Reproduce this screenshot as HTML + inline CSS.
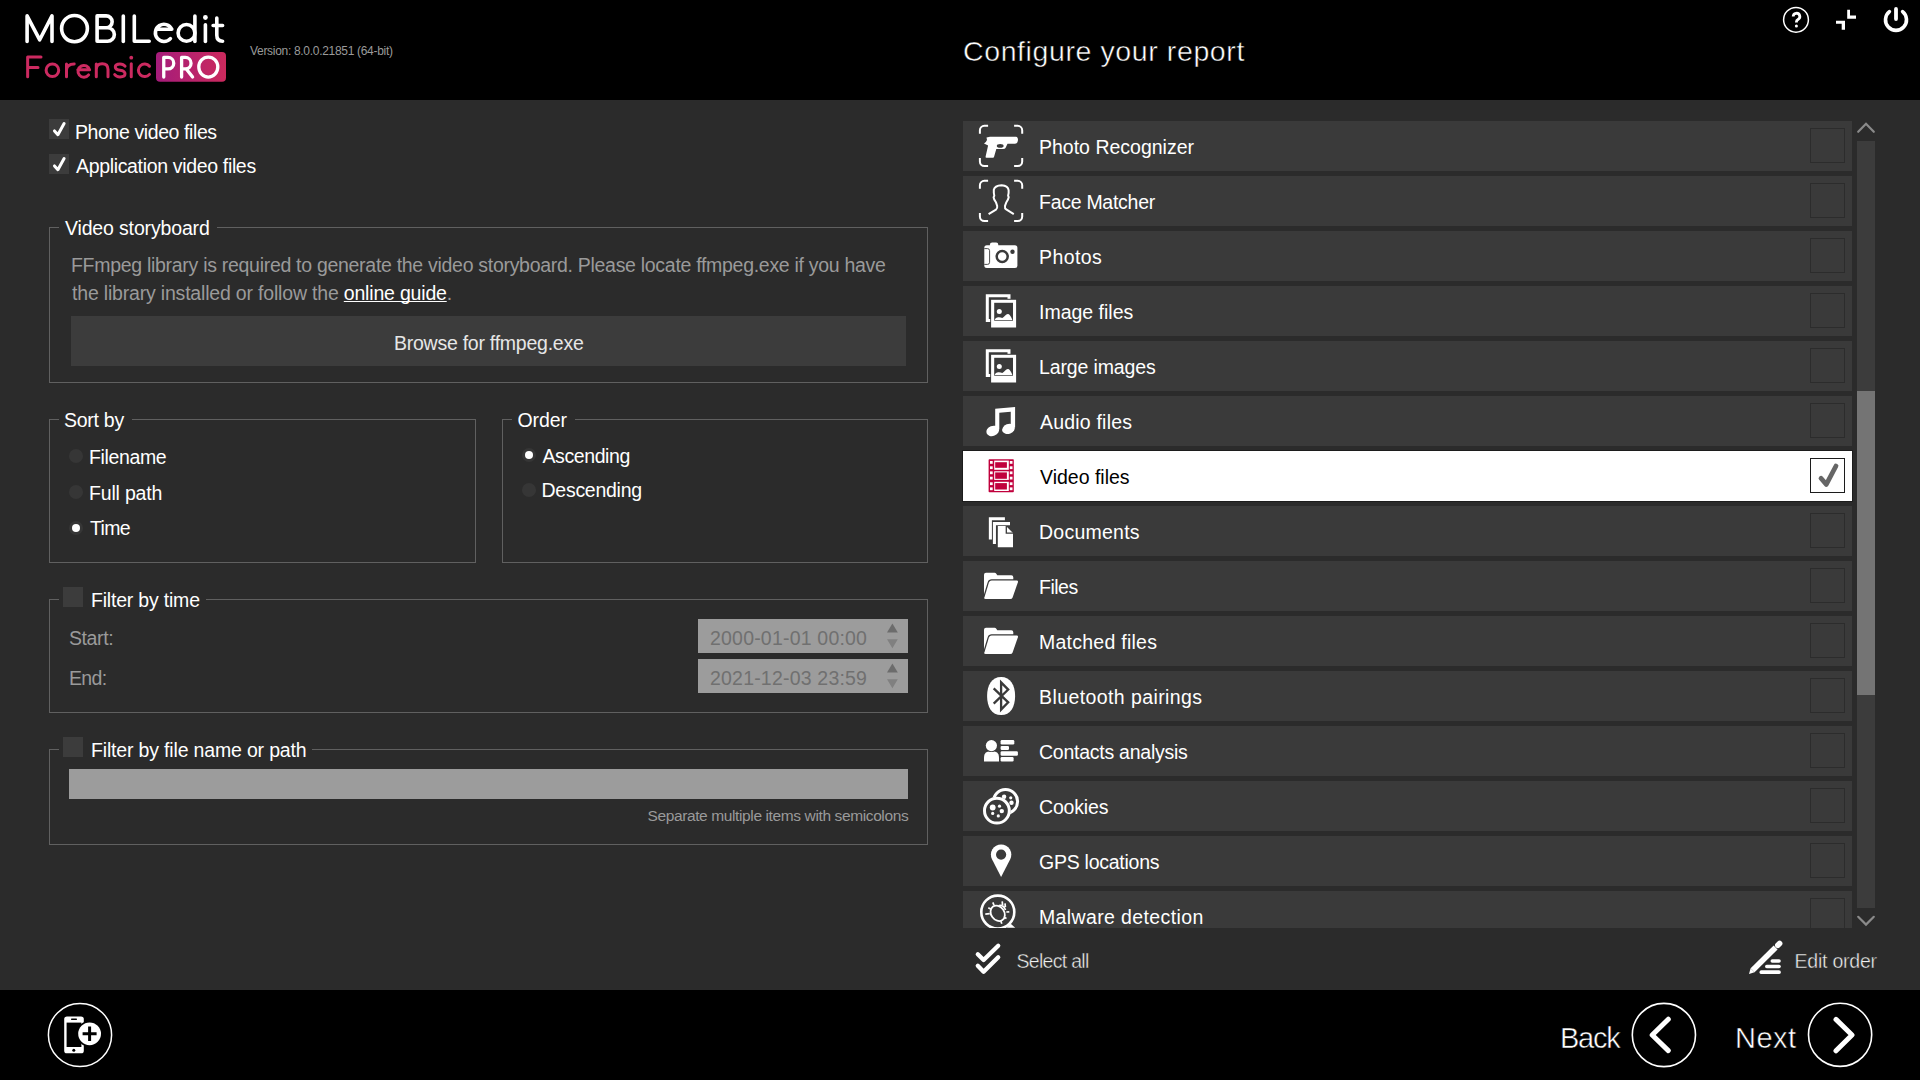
<!DOCTYPE html>
<html><head><meta charset="utf-8"><style>
*{margin:0;padding:0;box-sizing:border-box}
html,body{width:1920px;height:1080px;overflow:hidden;background:#2b2b2b;font-family:"Liberation Sans",sans-serif;color:#fff}
.a{position:absolute}
.t{position:absolute;white-space:nowrap;line-height:1;font-size:19.5px}
.grp{position:absolute;border:1px solid #606060}
.gap{position:absolute;background:#2b2b2b;height:3px}
.cb{position:absolute;width:20px;height:20px;background:#3c3c3c}
.rad{position:absolute;width:14px;height:14px;border-radius:50%;background:#363636}
.rad.on::after{content:"";position:absolute;left:3px;top:3px;width:8px;height:8px;border-radius:50%;background:#fff}
.gray{color:#9a9a9a}
.row{position:absolute;left:963px;width:889px;height:50px;background:#3a3a3a}
.row.sel{background:#fff;box-shadow:0 0 0 1px #1c1c1c}
.row .t{left:76px;top:17px}
.row.sel .t{color:#000}
.rcb{position:absolute;left:847px;top:7px;width:35px;height:35px;border:1px solid #2c2c2c}
.row.sel .rcb{border-color:#1c1c1c}
.ic{position:absolute;left:7px;top:-1px;width:60px;height:55px;overflow:visible}
</style></head><body>
<div class="a" style="left:0;top:0;width:1920px;height:100px;background:#000"></div>
<svg class="a" style="left:0;top:0" width="240" height="100" viewBox="0 0 240 100">
<defs><linearGradient id="pg" x1="0" x2="1" y1="0" y2="0"><stop offset="0" stop-color="#a51c7b"/><stop offset="1" stop-color="#cb2a5d"/></linearGradient></defs>
<g fill="none" stroke="#fff" stroke-width="3.6" stroke-linecap="round" stroke-linejoin="round">
<path d="M27.1,41.4V15.9L39.7,39.8L52,15.9V41.4"/>
<ellipse cx="74.5" cy="28.6" rx="12.9" ry="13.1"/>
<path d="M97.1,41.3V15.9H106.2A5.95,5.95 0 0 1 106.2,27.8H97.1M106.2,27.8H107.6A6.75,6.75 0 0 1 107.6,41.3H97.1"/>
<path d="M123.3,16.1V41.4"/>
<path d="M134.3,16.1V41.2H149.2"/>
<path d="M156.3,29.3H171.8A8.6,8.6 0 1 0 170.4,38.6"/>
<circle cx="186.5" cy="32.9" r="8.4"/>
<path d="M194.9,16.1V41.4"/>
<path d="M205.4,24.8V41.4"/>
<path d="M216.8,18V35.3Q216.8,41.2 222.6,41.2M213.1,25.5H222.6"/>
</g>
<circle cx="205.4" cy="17.5" r="2.4" fill="#fff"/>
<g fill="none" stroke="#cc2a60" stroke-width="3" stroke-linecap="round" stroke-linejoin="round">
<path d="M27.65,76.7V57H41M27.65,67.4H38"/>
<circle cx="52.4" cy="70.25" r="6.3"/>
<path d="M66.5,76.7V63.9M66.5,69.8Q66.8,64.2 74.2,63.9"/>
<path d="M77.8,69.8H89.6A5.9,5.9 0 1 0 88.6,74.9"/>
<path d="M96.3,76.7V63.9M96.3,69.6Q96.3,63.7 102.2,63.7Q108,63.7 108,69.6V76.7"/>
<path d="M125,66.2Q123.4,63.9 120,63.9Q115.3,63.9 115.3,67Q115.3,69.7 120,70.2Q125,70.8 125,73.8Q125,76.9 120,76.9Q116.2,76.9 114.7,74.5"/>
<path d="M131.25,63.8V76.7"/>
<path d="M149.5,66.25A6.3,6.3 0 1 0 149.5,74.35"/>
</g>
<circle cx="131.25" cy="57.7" r="1.9" fill="#cc2a60"/>
<rect x="156" y="52" width="70" height="29.75" rx="4" fill="url(#pg)"/>
<g fill="none" stroke="#fff" stroke-width="3.3" stroke-linecap="round" stroke-linejoin="round">
<path d="M163.75,77V57.4H168A5.75,5.75 0 0 1 168,68.9H163.75"/>
<path d="M181.6,77V57.4H185.3A5.75,5.75 0 0 1 185.3,68.9H181.6M186.5,69.2L192.6,77"/>
<ellipse cx="208.3" cy="67.05" rx="9.5" ry="10"/>
</g>
</svg>
<div class="t" style="left:250px;top:45px;font-size:12px;letter-spacing:-0.304px;color:#9a9a9a;">Version: 8.0.0.21851 (64-bit)</div>
<div class="t" style="left:963px;top:37px;font-size:28.5px;letter-spacing:0.600px;-webkit-text-stroke:0.5px #000;">Configure your report</div>
<svg class="a" style="left:1760px;top:0" width="160" height="45" viewBox="1760 0 160 45">
<circle cx="1796" cy="19.8" r="12.4" fill="none" stroke="#fff" stroke-width="1.5"/>
<path d="M1793.2,16.6a3.3,3.3 0 1 1 4.8,2.9q-1.6,0.9 -1.6,2.5v0.6" fill="none" stroke="#fff" stroke-width="2.8"/>
<circle cx="1796.4" cy="25.9" r="1.5" fill="#fff"/>
<path d="M1847.2,9.8h2.8v5.8h6v3.15h-8.8z M1836,20.7h9v9h-3.3v-5.9h-5.7z" fill="#fff"/>
<path d="M1889.4,11.7A10.5,10.5 0 1 0 1902.6,11.7" fill="none" stroke="#fff" stroke-width="3.6" stroke-linecap="round"/>
<path d="M1896,8.9V19" stroke="#fff" stroke-width="3.8" stroke-linecap="round"/>
</svg>
<div class="cb" style="left:49px;top:119px"></div><svg class="a" style="left:49px;top:119px" width="20" height="20" viewBox="0 0 20 20"><path d="M5.5,11.9L8.9,15.7L15.1,4.5" fill="none" stroke="#fff" stroke-width="3" stroke-linecap="round" stroke-linejoin="round"/></svg>
<div class="cb" style="left:49px;top:154px"></div><svg class="a" style="left:49px;top:154px" width="20" height="20" viewBox="0 0 20 20"><path d="M5.5,11.9L8.9,15.7L15.1,4.5" fill="none" stroke="#fff" stroke-width="3" stroke-linecap="round" stroke-linejoin="round"/></svg>
<div class="t" style="left:75px;top:123px;letter-spacing:-0.400px;">Phone video files</div>
<div class="t" style="left:76px;top:157px;letter-spacing:-0.336px;">Application video files</div>
<div class="grp" style="left:49px;top:227px;width:879px;height:156px"></div>
<div class="gap" style="left:59px;top:226px;width:158px"></div>
<div class="t" style="left:65px;top:219px;letter-spacing:-0.153px;">Video storyboard</div>
<div class="t" style="left:71px;top:256px;letter-spacing:-0.292px;color:#9a9a9a;">FFmpeg library is required to generate the video storyboard. Please locate ffmpeg.exe if you have</div>
<div class="t" style="left:72px;top:284px;letter-spacing:-0.188px;color:#9a9a9a;">the library installed or follow the <span style="color:#fff;text-decoration:underline;text-underline-offset:1px;text-decoration-skip-ink:none">online guide</span>.</div>
<div class="a" style="left:71px;top:316px;width:835px;height:50px;background:#3c3c3c"></div>
<div class="t" style="left:394px;top:334px;letter-spacing:-0.250px;color:#e6e6e6;">Browse for ffmpeg.exe</div>
<div class="grp" style="left:49px;top:419px;width:427px;height:144px"></div>
<div class="gap" style="left:59px;top:418px;width:73px"></div>
<div class="t" style="left:64px;top:411px;letter-spacing:-0.267px;">Sort by</div>
<div class="rad" style="left:69px;top:449px"></div>
<div class="t" style="left:89px;top:448px;letter-spacing:-0.371px;">Filename</div>
<div class="rad" style="left:69px;top:485px"></div>
<div class="t" style="left:89px;top:484px;letter-spacing:-0.188px;">Full path</div>
<div class="rad on" style="left:69px;top:521px"></div>
<div class="t" style="left:90px;top:519px;letter-spacing:-0.667px;">Time</div>
<div class="grp" style="left:502px;top:419px;width:426px;height:144px"></div>
<div class="gap" style="left:512px;top:418px;width:63px"></div>
<div class="t" style="left:517.5px;top:411px;letter-spacing:-0.075px;">Order</div>
<div class="rad on" style="left:522px;top:448px"></div>
<div class="t" style="left:542.5px;top:447px;letter-spacing:-0.412px;">Ascending</div>
<div class="rad" style="left:522px;top:483px"></div>
<div class="t" style="left:541.5px;top:481px;letter-spacing:-0.267px;">Descending</div>
<div class="grp" style="left:49px;top:599px;width:879px;height:114px"></div>
<div class="gap" style="left:59px;top:598px;width:147px"></div>
<div class="cb" style="left:63px;top:587px"></div>
<div class="t" style="left:91px;top:591px;letter-spacing:-0.200px;">Filter by time</div>
<div class="t" style="left:69px;top:629px;letter-spacing:-0.400px;color:#9a9a9a;">Start:</div>
<div class="t" style="left:69px;top:669px;letter-spacing:-0.667px;color:#9a9a9a;">End:</div>
<div class="a" style="left:698px;top:619px;width:210px;height:34px;background:#9c9c9c"></div>
<div class="t" style="left:710px;top:629px;letter-spacing:0.200px;color:#707070;">2000-01-01 00:00</div>
<svg class="a" style="left:885px;top:619px" width="16" height="34" viewBox="0 0 16 34"><path d="M2,13.5L7.4,4.4L12.8,13.5Z" fill="#6c6c6c"/><path d="M2,20.3L7.4,29.3L12.8,20.3Z" fill="#808080"/></svg>
<div class="a" style="left:698px;top:659px;width:210px;height:34px;background:#9c9c9c"></div>
<div class="t" style="left:710px;top:669px;letter-spacing:0.200px;color:#707070;">2021-12-03 23:59</div>
<svg class="a" style="left:885px;top:659px" width="16" height="34" viewBox="0 0 16 34"><path d="M2,13.5L7.4,4.4L12.8,13.5Z" fill="#6c6c6c"/><path d="M2,20.3L7.4,29.3L12.8,20.3Z" fill="#808080"/></svg>
<div class="grp" style="left:49px;top:749px;width:879px;height:96px"></div>
<div class="gap" style="left:59px;top:748px;width:253px"></div>
<div class="cb" style="left:63px;top:737px"></div>
<div class="t" style="left:91px;top:741px;letter-spacing:-0.169px;">Filter by file name or path</div>
<div class="a" style="left:69px;top:769px;width:839px;height:30px;background:#9c9c9c"></div>
<div class="t" style="left:647.5px;top:808px;font-size:15.5px;letter-spacing:-0.382px;color:#9a9a9a;">Separate multiple items with semicolons</div>
<div class="a" style="left:962px;top:120px;width:892px;height:808px;overflow:hidden"><div class="a" style="left:1px;top:1px">
<div class="row" style="left:0;top:0px"><svg class="ic" viewBox="0 0 60 55"><path d="M9.9,13.7V10.3A4.5,4.5 0 0 1 14.4,5.8H18.1M44.1,5.8H47.7A4.5,4.5 0 0 1 52.2,10.3V13.7M9.9,38V41.6A4.5,4.5 0 0 0 14.4,46.1H18.1M44.1,46.1H47.7A4.5,4.5 0 0 0 52.2,41.6V38" fill="none" stroke="#fff" stroke-width="2"/><path d="M16.5,17.5L20,16.8L46,16.8Q48,17 48,20L47.5,22Q47,23.7 45,23.7L37.5,23.7L35.5,28Q35,29 33,29L26.3,29L24,37Q23.8,37.8 23,37.8L16.5,37.8Q15.3,37.8 15.6,36.5L18.1,25.5L14,23.6Q16,22.5 17,20Z" fill="#fff"/><ellipse cx="30.2" cy="25.9" rx="3.4" ry="1.8" fill="#3a3a3a"/></svg><div class="t" style="left:76px;top:17px;letter-spacing:0.0px">Photo Recognizer</div><div class="rcb"></div></div>
<div class="row" style="left:0;top:55px"><svg class="ic" viewBox="0 0 60 55"><path d="M9.9,13.7V10.3A4.5,4.5 0 0 1 14.4,5.8H18.1M44.1,5.8H47.7A4.5,4.5 0 0 1 52.2,10.3V13.7M9.9,38V41.6A4.5,4.5 0 0 0 14.4,46.1H18.1M44.1,46.1H47.7A4.5,4.5 0 0 0 52.2,41.6V38" fill="none" stroke="#fff" stroke-width="2"/><path d="M18.6,39.2L26,34.6Q27.6,33.4 27.2,31L26,27.4Q23.8,24.6 23.6,22.4L24.3,20.6Q23.6,17.4 23.8,14.8Q24.6,10.6 31.6,10.2Q38.2,10.8 38.6,15.2Q38.9,18 38.1,20.6L38.7,22.2Q38.3,24.4 36.4,27.2L35,30.8Q34.6,33.4 36.2,34.4L43.8,39.2" fill="none" stroke="#fff" stroke-width="2" stroke-linejoin="round"/></svg><div class="t" style="left:76px;top:17px;letter-spacing:-0.273px">Face Matcher</div><div class="rcb"></div></div>
<div class="row" style="left:0;top:110px"><svg class="ic" viewBox="0 0 60 55"><rect x="14.3" y="15.3" width="33.1" height="22.7" rx="2.5" fill="#fff"/><rect x="19.9" y="12.5" width="8.4" height="5" rx="2.2" fill="#fff"/><circle cx="32.2" cy="26.5" r="5.5" fill="none" stroke="#3a3a3a" stroke-width="2.5"/><circle cx="42.5" cy="21.8" r="2.2" fill="#3a3a3a"/><path d="M14.3,18.6H17.5Q19.6,18.6 19.6,20.7V32.3Q19.6,34.4 17.5,34.4H14.3" fill="none" stroke="#3a3a3a" stroke-width="0.9"/></svg><div class="t" style="left:76px;top:17px;letter-spacing:0.4px">Photos</div><div class="rcb"></div></div>
<div class="row" style="left:0;top:165px"><svg class="ic" viewBox="0 0 60 55"><path d="M15.8,9.2H40.5V36.9H15.8ZM18.8,12.2V33.9H37.5V12.2Z" fill="#fff" fill-rule="evenodd"/><rect x="20.2" y="13.8" width="26.8" height="29.5" fill="#3a3a3a"/><rect x="21.1" y="14.8" width="25" height="27.7" fill="#fff"/><rect x="24.2" y="17.8" width="18.8" height="17.9" fill="#3a3a3a"/><circle cx="29.3" cy="26.5" r="2.5" fill="#fff"/><path d="M24.6,34.9Q25.5,32.6 28,32.2Q30.5,32 32.3,32.9Q33.5,32.5 35.5,30.2Q37,28.8 38.2,28.9Q40.2,29.2 42.4,34.9Z" fill="#fff"/></svg><div class="t" style="left:76px;top:17px;letter-spacing:0.0px">Image files</div><div class="rcb"></div></div>
<div class="row" style="left:0;top:220px"><svg class="ic" viewBox="0 0 60 55"><path d="M15.8,9.2H40.5V36.9H15.8ZM18.8,12.2V33.9H37.5V12.2Z" fill="#fff" fill-rule="evenodd"/><rect x="20.2" y="13.8" width="26.8" height="29.5" fill="#3a3a3a"/><rect x="21.1" y="14.8" width="25" height="27.7" fill="#fff"/><rect x="24.2" y="17.8" width="18.8" height="17.9" fill="#3a3a3a"/><circle cx="29.3" cy="26.5" r="2.5" fill="#fff"/><path d="M24.6,34.9Q25.5,32.6 28,32.2Q30.5,32 32.3,32.9Q33.5,32.5 35.5,30.2Q37,28.8 38.2,28.9Q40.2,29.2 42.4,34.9Z" fill="#fff"/></svg><div class="t" style="left:76px;top:17px;letter-spacing:-0.136px">Large images</div><div class="rcb"></div></div>
<div class="row" style="left:0;top:275px"><svg class="ic" viewBox="0 0 60 55"><path d="M25.2,13.75L45.1,12V32.6H40.75V16.7L29.3,17.8V34.6H25.2Z" fill="#fff"/><ellipse cx="22.7" cy="35.9" rx="6.6" ry="5" transform="rotate(-22 22.7 35.9)" fill="#fff"/><ellipse cx="38.5" cy="33.9" rx="6.5" ry="4.9" transform="rotate(-22 38.5 33.9)" fill="#fff"/></svg><div class="t" style="left:77px;top:17px;letter-spacing:0.2px">Audio files</div><div class="rcb"></div></div>
<div class="row sel" style="left:0;top:330px"><svg class="ic" viewBox="0 0 60 55"><rect x="18.6" y="9.2" width="25.2" height="33.1" rx="0.8" fill="#c0003c"/><rect x="20" y="11" width="2.7" height="2.8" fill="#fff"/><rect x="39.8" y="11" width="2.7" height="2.8" fill="#fff"/><rect x="20" y="16.3" width="2.7" height="2.8" fill="#fff"/><rect x="39.8" y="16.3" width="2.7" height="2.8" fill="#fff"/><rect x="20" y="21.4" width="2.7" height="2.8" fill="#fff"/><rect x="39.8" y="21.4" width="2.7" height="2.8" fill="#fff"/><rect x="20" y="26.7" width="2.7" height="2.8" fill="#fff"/><rect x="39.8" y="26.7" width="2.7" height="2.8" fill="#fff"/><rect x="20" y="32.3" width="2.7" height="2.8" fill="#fff"/><rect x="39.8" y="32.3" width="2.7" height="2.8" fill="#fff"/><rect x="20" y="37.4" width="2.7" height="2.8" fill="#fff"/><rect x="39.8" y="37.4" width="2.7" height="2.8" fill="#fff"/><rect x="24.2" y="10.6" width="14.6" height="9.2" fill="#fff"/><rect x="24.2" y="21.3" width="14.6" height="8.6" fill="#fff"/><rect x="24.2" y="31.8" width="14.6" height="9.2" fill="#fff"/><rect x="25.2" y="12.2" width="11.7" height="5.6" fill="#c0003c"/><rect x="25.2" y="22.4" width="11.7" height="6.4" fill="#c0003c"/><rect x="25.2" y="33.1" width="11.7" height="6.4" fill="#c0003c"/></svg><div class="t" style="left:77px;top:17px;letter-spacing:0.0px">Video files</div><div class="rcb"><svg class="a" style="left:-1px;top:-1px" width="35" height="35" viewBox="0 0 35 35"><path d="M11,20.3L16.3,26.4L26,8" fill="none" stroke="#666" stroke-width="4.8" stroke-linecap="round" stroke-linejoin="round"/></svg></div></div>
<div class="row" style="left:0;top:385px"><svg class="ic" viewBox="0 0 60 55"><path d="M18.85,12.2H34.9V15.25H21.9V34.6H18.85Z M22.9,17.1H40V20.15H25.95V39H22.9Z" fill="#fff"/><path d="M27.8,20.9H36L43,28V42.3H27.8Z" fill="#fff"/><path d="M36.3,21V28.2H43" fill="none" stroke="#3a3a3a" stroke-width="1.3"/></svg><div class="t" style="left:76px;top:17px;letter-spacing:0.25px">Documents</div><div class="rcb"></div></div>
<div class="row" style="left:0;top:440px"><svg class="ic" viewBox="0 0 60 55"><path d="M14,39V14.7Q14,12.7 16,12.7H24.6Q25.6,12.7 26.3,13.8L27.3,15.3H41.3Q43.3,15.3 43.3,17.3V22H20L14,39Z" fill="#fff"/><path d="M14.3,37.6L18.9,22.6Q19.6,20.6 21.6,20.6H48.5" fill="none" stroke="#3a3a3a" stroke-width="2.6"/><path d="M21.6,20.6H46.8Q48.4,20.6 47.9,22.2L42.6,37.4Q42,39 40.2,39H15.6Q14,39 14.4,37.6L18.9,22.6Q19.6,20.6 21.6,20.6Z" fill="#fff"/></svg><div class="t" style="left:76px;top:17px;letter-spacing:-0.5px">Files</div><div class="rcb"></div></div>
<div class="row" style="left:0;top:495px"><svg class="ic" viewBox="0 0 60 55"><path d="M14,39V14.7Q14,12.7 16,12.7H24.6Q25.6,12.7 26.3,13.8L27.3,15.3H41.3Q43.3,15.3 43.3,17.3V22H20L14,39Z" fill="#fff"/><path d="M14.3,37.6L18.9,22.6Q19.6,20.6 21.6,20.6H48.5" fill="none" stroke="#3a3a3a" stroke-width="2.6"/><path d="M21.6,20.6H46.8Q48.4,20.6 47.9,22.2L42.6,37.4Q42,39 40.2,39H15.6Q14,39 14.4,37.6L18.9,22.6Q19.6,20.6 21.6,20.6Z" fill="#fff"/></svg><div class="t" style="left:76px;top:17px;letter-spacing:0.25px">Matched files</div><div class="rcb"></div></div>
<div class="row" style="left:0;top:550px"><svg class="ic" viewBox="0 0 60 55"><path d="M31.1,6.9C40.5,6.9 45.1,15 45.1,26C45.1,37 40.5,45.1 31.1,45.1C21.7,45.1 17.1,37 17.1,26C17.1,15 21.7,6.9 31.1,6.9Z" fill="#fff"/><path d="M23.7,18.3L38.2,32.3L31.1,39.6V12.4L38.2,19.6L23.7,33.6" fill="none" stroke="#3a3a3a" stroke-width="2.3"/></svg><div class="t" style="left:76px;top:17px;letter-spacing:0.412px">Bluetooth pairings</div><div class="rcb"></div></div>
<div class="row" style="left:0;top:605px"><svg class="ic" viewBox="0 0 60 55"><path d="M14,36.4V32.2Q14,25.9 21.5,25.9Q29,25.9 29,32.2V36.4Z" fill="#fff"/><circle cx="21.4" cy="20.6" r="6.4" fill="#3a3a3a"/><circle cx="21.4" cy="20.6" r="5.6" fill="#fff"/><rect x="30.6" y="15" width="13.7" height="4.6" rx="1.3" fill="#fff"/><rect x="30.6" y="20.9" width="8.4" height="4.1" rx="1.2" fill="#fff"/><rect x="30.6" y="26.2" width="17.3" height="4.6" rx="1.3" fill="#fff"/><rect x="30.6" y="32.1" width="13" height="4.3" rx="1.2" fill="#fff"/></svg><div class="t" style="left:76px;top:17px;letter-spacing:-0.25px">Contacts analysis</div><div class="rcb"></div></div>
<div class="row" style="left:0;top:660px"><svg class="ic" viewBox="0 0 60 55"><circle cx="35.5" cy="21.5" r="12.1" fill="none" stroke="#fff" stroke-width="3"/><circle cx="34.1" cy="16.8" r="2.2" fill="#fff"/><circle cx="40.75" cy="17.8" r="1.6" fill="#fff"/><circle cx="41.5" cy="22.7" r="2.2" fill="#fff"/><circle cx="26.9" cy="30.7" r="13.6" fill="#3a3a3a"/><circle cx="26.9" cy="30.7" r="12.4" fill="none" stroke="#fff" stroke-width="3"/><circle cx="22.7" cy="27.5" r="2.9" fill="#fff"/><circle cx="29.5" cy="26.2" r="1.6" fill="#fff"/><circle cx="31.8" cy="31.1" r="2.2" fill="#fff"/><circle cx="22.7" cy="33.4" r="1.6" fill="#fff"/><circle cx="28.3" cy="35.9" r="1.6" fill="#fff"/></svg><div class="t" style="left:76px;top:17px;letter-spacing:-0.167px">Cookies</div><div class="rcb"></div></div>
<div class="row" style="left:0;top:715px"><svg class="ic" viewBox="0 0 60 55"><path d="M31.1,42L22,24.2A10.2,10.2 0 1 1 40.2,24.2Z" fill="#fff"/><circle cx="31.1" cy="19.6" r="5.1" fill="#3a3a3a"/></svg><div class="t" style="left:76px;top:17px;letter-spacing:-0.25px">GPS locations</div><div class="rcb"></div></div>
<div class="row" style="left:0;top:770px"><svg class="ic" viewBox="0 0 60 55"><circle cx="27.8" cy="22.1" r="16.5" fill="none" stroke="#fff" stroke-width="2.6"/><path d="M36.7,37.7L40.7,33.8L45.2,37.7Z" fill="#fff"/><ellipse cx="27.7" cy="23.3" rx="6.6" ry="8.2" transform="rotate(-35 27.7 23.3)" fill="none" stroke="#fff" stroke-width="1.8"/><path d="M22.8,12.3L24,15.1M18.3,17.8L21,19.2M15.3,24.1L19.8,23.7M34.2,27.3L36.5,28.5M30.8,31L31.8,33.8M36.3,22L39.3,21.8M32.2,11.4L32.6,15.1M35,13.3L35.4,17.1M29,15.6Q33.5,14.5 35.5,20" fill="none" stroke="#fff" stroke-width="1.7"/></svg><div class="t" style="left:76px;top:17px;letter-spacing:0.375px">Malware detection</div><div class="rcb"></div></div>
</div></div>
<div class="a" style="left:1857px;top:141px;width:18px;height:767px;background:#3c3c3c"></div>
<div class="a" style="left:1857px;top:391px;width:18px;height:304px;background:#747474"></div>
<svg class="a" style="left:1850px;top:115px" width="32" height="820" viewBox="1850 115 32 820"><path d="M1858.2,131.8L1866,123.8L1873.8,131.8" fill="none" stroke="#8a8a8a" stroke-width="2.2" stroke-linecap="round"/><path d="M1858.2,916.8L1866,924.6L1873.8,916.8" fill="none" stroke="#8a8a8a" stroke-width="2.2" stroke-linecap="round"/></svg>
<svg class="a" style="left:960px;top:930px" width="60" height="55" viewBox="960 930 60 55"><path d="M977.8,954.2L983.6,960L998.2,945.8M977.8,965.8L983.6,971.8L998.2,957.2" fill="none" stroke="#fff" stroke-width="4.3" stroke-linecap="round" stroke-linejoin="round"/></svg>
<div class="t" style="left:1016.5px;top:952px;letter-spacing:-0.711px;color:#f0f0f0;-webkit-text-stroke:0.4px #2b2b2b;">Select all</div>
<svg class="a" style="left:1740px;top:930px" width="50" height="55" viewBox="1740 930 50 55"><path d="M1752.6,970.2L1775.6,947.4" stroke="#fff" stroke-width="5.6"/><path d="M1749,973.9L1750.6,968.2L1754.6,972.2Z" fill="#fff"/><path d="M1777.8,945.2L1779.6,943.4" stroke="#fff" stroke-width="5.6" stroke-linecap="round"/><rect x="1770.5" y="959.3" width="10.3" height="3.5" rx="1.75" fill="#fff"/><rect x="1765" y="964.8" width="15.8" height="3.5" rx="1.75" fill="#fff"/><rect x="1759.5" y="970.2" width="21.3" height="3.9" rx="1.9" fill="#fff"/></svg>
<div class="t" style="left:1794.5px;top:952px;letter-spacing:-0.222px;color:#f0f0f0;-webkit-text-stroke:0.4px #2b2b2b;">Edit order</div>
<div class="a" style="left:0;top:990px;width:1920px;height:90px;background:#000"></div>
<svg class="a" style="left:0;top:990px" width="200" height="90" viewBox="0 990 200 90">
<circle cx="80" cy="1035" r="31.6" fill="none" stroke="#fff" stroke-width="1.5"/>
<rect x="64.2" y="1016.5" width="19.6" height="36.8" rx="2.6" fill="#fff"/>
<rect x="66.6" y="1022.6" width="14.8" height="24.4" fill="#000"/>
<rect x="71" y="1018.6" width="6" height="1.3" rx="0.6" fill="#000"/>
<circle cx="73.8" cy="1050.3" r="1.5" fill="#000"/>
<circle cx="89.6" cy="1033.8" r="13" fill="#000"/>
<circle cx="89.6" cy="1033.8" r="11.4" fill="#fff"/>
<path d="M82.6,1033.8h14M89.6,1026.6v14.4" stroke="#000" stroke-width="3"/>
</svg>
<div class="t" style="left:1560px;top:1024px;font-size:29px;letter-spacing:-1.233px;-webkit-text-stroke:0.5px #000;">Back</div>
<div class="t" style="left:1735px;top:1024px;font-size:29px;letter-spacing:0.467px;-webkit-text-stroke:0.5px #000;">Next</div>
<svg class="a" style="left:1620px;top:990px" width="300" height="90" viewBox="1620 990 300 90">
<circle cx="1663.9" cy="1035" r="31.6" fill="none" stroke="#fff" stroke-width="1.6"/>
<path d="M1668.3,1019.2L1652.2,1035L1668.3,1050.6" fill="none" stroke="#fff" stroke-width="5" stroke-linecap="round" stroke-linejoin="round"/>
<circle cx="1840.1" cy="1034.8" r="31.6" fill="none" stroke="#fff" stroke-width="1.6"/>
<path d="M1836,1019.4L1852,1035L1836,1050.8" fill="none" stroke="#fff" stroke-width="5" stroke-linecap="round" stroke-linejoin="round"/>
</svg>
</body></html>
